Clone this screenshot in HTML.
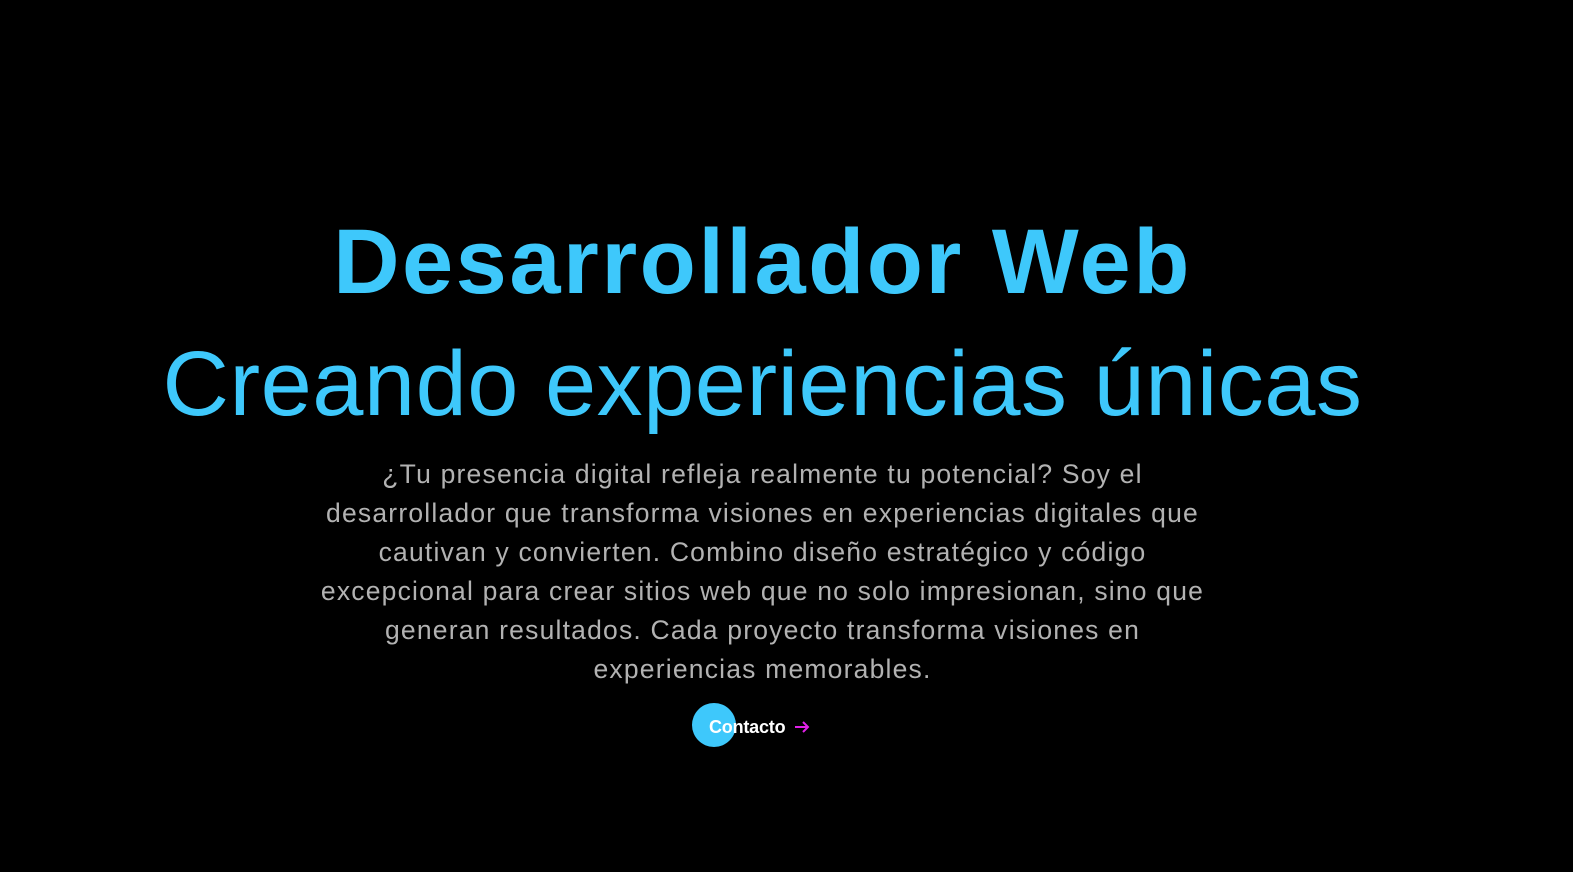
<!DOCTYPE html>
<html><head><meta charset="utf-8"><style>
html,body{margin:0;padding:0;background:#000;width:1573px;height:872px;overflow:hidden;font-family:"Liberation Sans",sans-serif}
.h1{position:absolute;left:0;width:1525px;top:207px;text-align:center;color:#3ec8fb;font-weight:700;font-size:92px;letter-spacing:2.5px;line-height:110px}
.h2{position:absolute;left:0;width:1525px;top:329px;text-align:center;color:#3ec8fb;font-weight:300;font-size:92px;letter-spacing:0.5px;line-height:110px}
.p{position:absolute;left:0;width:1525px;top:455px;text-align:center;color:#b2b2b2;font-size:26.5px;line-height:39px;letter-spacing:1.2px}
.p div{white-space:nowrap}
.dot{position:absolute;left:692px;top:703px;width:44px;height:44px;border-radius:50%;background:#3ec8fb}
.btn{position:absolute;left:709px;top:715px;color:#fff;font-size:18px;font-weight:700;letter-spacing:-0.2px;line-height:24px}
.arr{position:absolute;left:793px;top:717px}
</style></head><body>
<div class="h1">Desarrollador Web</div>
<div class="h2">Creando experiencias únicas</div>
<div class="p">
<div>¿Tu presencia digital refleja realmente tu potencial? Soy el</div>
<div>desarrollador que transforma visiones en experiencias digitales que</div>
<div>cautivan y convierten. Combino diseño estratégico y código</div>
<div>excepcional para crear sitios web que no solo impresionan, sino que</div>
<div>generan resultados. Cada proyecto transforma visiones en</div>
<div>experiencias memorables.</div>
</div>
<div class="dot"></div>
<div class="btn">Contacto</div>
<svg class="arr" width="18" height="20" viewBox="0 0 18 20"><path d="M2 10H15M10 5L15 10L10 15" stroke="#e020e8" stroke-width="2" fill="none"/></svg>
</body></html>
